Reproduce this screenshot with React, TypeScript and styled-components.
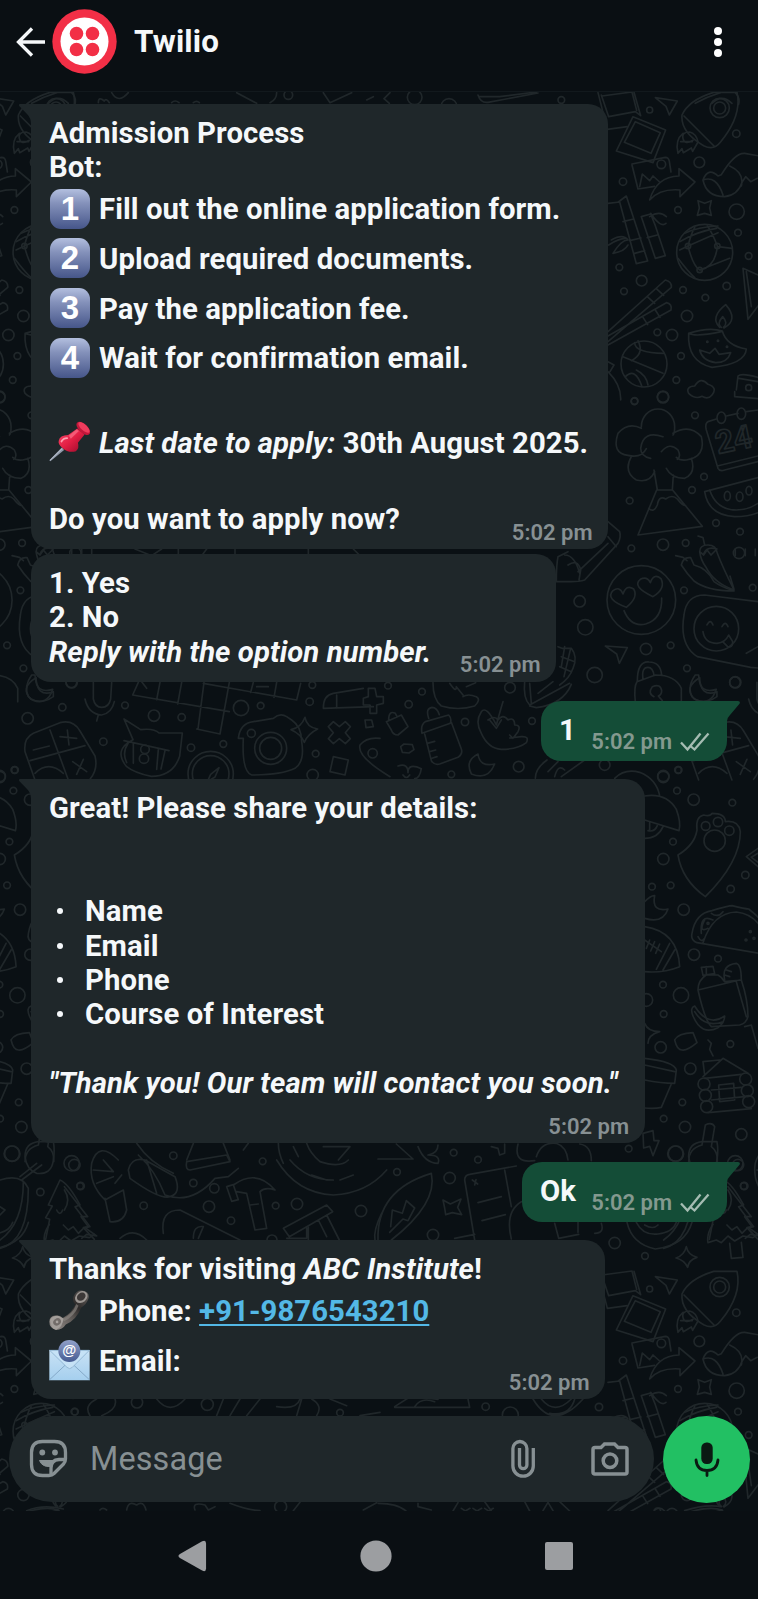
import React from "react";
import styled, { createGlobalStyle } from "styled-components";

const GlobalStyle = createGlobalStyle`
  * { box-sizing: border-box; }
  body { margin: 0; background: #0a1014; }
`;

const Screen = styled.div`
  position: relative;
  isolation: isolate;
  display: flex;
  flex-direction: column;
  width: 758px;
  height: 1599px;
  overflow: hidden;
  background: #0a1014;
  font-family: Roboto, "Liberation Sans", sans-serif;
  color: #f5f8fa;
`;

const Header = styled.header`
  display: flex;
  align-items: center;
  height: 92px;
  padding: 0 29px 8px 16px;
  background: #0a0f13;
  border-bottom: 1px solid #12191d;
`;

const Logo = styled.svg`
  width: 65px;
  height: 65px;
  margin-left: 6px;
`;

const Title = styled.h1`
  margin: 0 auto 0 17px;
  font-size: 31.3px;
  line-height: 40px;
  font-weight: 700;
  letter-spacing: 0.15px;
`;

const Chat = styled.main`
  position: relative;
  display: flex;
  flex-direction: column;
  height: 1419px;
  overflow: hidden;
`;

const Wallpaper = styled.svg`
  position: absolute;
  inset: 0;
  z-index: -1;
`;

const Bubble = styled.section<{ $w: number; $gap: number; $out?: boolean; $tail?: boolean }>`
  position: relative;
  width: ${(p) => p.$w}px;
  margin: ${(p) => p.$gap}px ${(p) => (p.$out ? 31 : 0)}px 0 ${(p) => (p.$out ? 0 : 31)}px;
  align-self: ${(p) => (p.$out ? "flex-end" : "flex-start")};
  padding: 12px ${(p) => (p.$out ? 17 : 15.5)}px 3.500px 18px;
  border-radius: ${(p) => (!p.$tail ? "20px" : p.$out ? "20px 0 20px 20px" : "0 20px 20px 20px")};
  background: ${(p) => (p.$out ? "#144d37" : "#1f272a")};
`;

const Tail = styled.svg<{ $out?: boolean }>`
  position: absolute;
  top: 0;
  ${(p) => (p.$out ? "right: -13px;" : "left: -13px;")}
  width: 14px;
  height: 20px;
  fill: ${(p) => (p.$out ? "#144d37" : "#1f272a")};
`;

const Line = styled.div`
  height: 34.4px;
  font-size: 29.3px;
  line-height: 34.4px;
  font-weight: 700;
  letter-spacing: 0.07px;
  white-space: nowrap;
`;

const EmojiLine = styled(Line)`
  display: flex;
  align-items: center;
  gap: 9px;
  height: 49.7px;
`;

const Keycap = styled.span`
  display: flex;
  align-items: center;
  justify-content: center;
  width: 40px;
  height: 40px;
  margin: 0 0 2px 1px;
  border-radius: 11px;
  background: linear-gradient(#b3bfdf, #8592bb 35%, #46568a);
  color: #fff;
  font: 700 33px/40px "Liberation Sans", sans-serif;
`;

const Emoji = styled.svg`
  width: 41px;
  height: 41px;
  margin-bottom: 2px;
`;

const Footer = styled.div<{ $space?: number }>`
  display: flex;
  align-items: flex-end;
  justify-content: space-between;
  margin-top: ${(p) => p.$space || 0}px;
`;

const FooterText = styled(Line)`
  margin-bottom: 9.4px;
`;

const FooterEmojiLine = styled(EmojiLine)`
  margin-bottom: 9.4px;
`;

const OutText = styled(Line)`
  margin-bottom: 10px;
`;

const Time = styled.span<{ $lift?: number }>`
  display: flex;
  align-items: center;
  gap: 8px;
  height: 26px;
  margin-bottom: ${(p) => p.$lift || 0}px;
  margin-left: auto;
  font-size: 22px;
  line-height: 26px;
  font-weight: 600;
  color: ${(p) => (p.$lift ? "#84998f" : "#879093")};
  white-space: nowrap;
`;

const Bullets = styled.ul`
  margin: 68.8px 0 34.4px;
  padding: 0;
  list-style: none;
`;

const Item = styled.li`
  display: flex;
  align-items: center;
  gap: 22px;
  height: 34.4px;
  padding-left: 8px;
  font-size: 29.3px;
  font-weight: 700;
  letter-spacing: 0.1px;
  &::before {
    content: "";
    width: 6px;
    height: 6px;
    border-radius: 50%;
    background: #f5f8fa;
  }
`;

const Phone = styled.a`
  color: #53b8e6;
  text-decoration: underline;
  text-decoration-thickness: 2px;
  text-underline-offset: 3px;
`;

const Composer = styled.form`
  display: flex;
  align-items: flex-start;
  gap: 9px;
  margin: auto 8px 8px 9px;
`;

const Field = styled.div`
  display: flex;
  align-items: center;
  width: 645px;
  height: 86px;
  padding: 0 25px 0 20px;
  border-radius: 43px;
  background: #1f272a;
  color: #879093;
`;

const Placeholder = styled.span`
  margin: 0 auto 0 21px;
  font-size: 32.4px;
  line-height: 40px;
  letter-spacing: 0.15px;
`;

const CameraIcon = styled.svg`
  width: 38px;
  height: 36px;
  margin-left: 55px;
`;

const Mic = styled.div`
  display: flex;
  align-items: center;
  justify-content: center;
  width: 87px;
  height: 87px;
  border-radius: 50%;
  background: #22c063;
`;

const Navigation = styled.nav`
  display: flex;
  align-items: center;
  justify-content: space-between;
  height: 88px;
  padding: 2px 185px 0 178px;
  background: #0a0f13;
`;

const dots = (list: number[][]) => list.map(([x, y, r], i) => <circle key={i} cx={x} cy={y} r={r} />);

const Tile = () => (
  <g id="tile">
    <g transform="translate(378 0) scale(.33333)">
      <path d="M18 296l18-18M18 296l16 14M300 285q8 25 30 22l150-28M305 290h60l110-14" />
      <path d="M660 278l28 110 60-8M670 285l22 65 80-15 16 12-20-70M672 288l90-12 14 55" />
      <path d="M765 350l98 40-38 98-110-35zM772 365l75 33-28 62-80-33z" />
      <path d="M832 293l66 10-24 42-10-26z" />
      <path d="M912 345q20-45 95-68h70q16 70-50 150-20 26-50 10-70-40-65-92zM918 348l90 90" />
      <circle cx="1025" cy="324" r="29" /><circle cx="1025" cy="324" r="18" />
      <path d="M915 400q-25 20-15 60l12-14 4 12 24-14 4 10 16-28q-5-25-25-30-25 0-20 20t30 5M908 425h35" />
      <path d="M762 492l100-20q10 0 12 12l5 32M762 495l18 72 50-8M785 560l8-38 22 20 10-14 20 18" /><circle cx="850" cy="493" r="13" />
      <path d="M815 600q20-70 88-72v-22l48 40-45 44v-20q-60-5-91 30z" />
      <path d="M975 540q15-40 45-12l10-4q40-66 70-64l44 8M975 540q10 50 65 50 40-5 53-45l10-15 15 15 20-10M975 540q40-15 60 45M1055 498q45 20 35 60" />
      <path d="M960 602l20 8 20-8-5 22 5 22-20-6-22 6 6-22zM690 610l35-4 50 185 34-8-64-195-24 18M735 665l32-8M755 722l34-8M770 760l30-8" />
      <path d="M790 650l42 125 30-8-30-90-14-35-28 8zM808 713l30-8M815 650q30-20 50 0M818 640q30 45 46 30M700 720q35-20 50 0-20 0-45 40 35-5 45-25M692 735q30-20 50-20" />
      <circle cx="980" cy="757" r="84" />
      <path d="M920 700q40-20 100-22M905 725q50-30 110-40M900 775q30 40 50 58M930 738q15 60 35 72M930 738l90-40M965 810l90-35M1018 738q-5 60-50 72M930 738q10-40 20-55M1018 738q-15-40-30-60M1020 740l42 5M905 750l25-12" />
      {dots([[930, 738, 8], [1018, 738, 8], [965, 810, 8]])}
      <path d="M690 995l172-155q20 5 18 22L690 1025M690 1008l175-100q18 4 14 22L690 1035M808 890l22 20M835 866l22 20M795 952l14 22M832 930l14 22" />
      <path d="M1095 805l45 20M1095 805l15 153 30-40M1105 815l15 105" />
      <path d="M932 1000q-5 85 70 102 100-10 103-55-60-10-72-54-40-12-101 7zM932 1000q20 12 98-5M1025 982q-30-30 18-68 40 45-5 70M1030 982q-15-10 4-32 18 20 2 32M965 1050l30 10 16-15 12 18 35-5q-10 30-45 30-40-5-48-38z" />
      <circle cx="798" cy="1092" r="69" />
      <path d="M735 1070l120 50M770 1028q0 30 88 32M742 1130q30-30 50 30M780 1022q20 40 -20 60M810 1155q-5-30-35-45" />
      <path d="M932 1180q-10-20 18-22 18-30 40-5 30 10 12 32-12 15-30 4-20 10-40-9zM1075 1170l5-42q10-10 60 4M1070 1175v15l70 6M1083 1135l57 10M690 1115q40 40 38 85M690 1085l18 10-12 20" />
      {dots([[110, 292, 22], [213, 320, 24], [550, 300, 10], [815, 330, 9], [1075, 401, 11], [964, 487, 16], [735, 545, 11], [900, 630, 10], [1076, 635, 23], [1080, 698, 10], [1112, 768, 10], [724, 802, 10], [791, 842, 16], [738, 874, 10], [915, 870, 10], [1046, 858, 11], [982, 893, 10], [927, 948, 17], [838, 997, 10], [882, 1005, 17], [909, 1068, 10], [895, 1140, 10], [855, 1190, 17], [770, 1203, 10], [1112, 1163, 9], [988, 1025, 2], [1020, 1022, 2], [1047, 1040, 2]])}
    </g>
    <g transform="translate(378 380) scale(.33333)">
      <path d="M790 140a50 53 0 1 1 100 0q0 20-5 25M790 145q-40-20-70 15-20 60 30 66 40 10 55-20M885 160q50-30 85 10 15 60-45 70-20 2-30-8M760 230q-25 45 15 70 40 10 55-25M940 235q15 45-20 60-40 0-55-30M855 170q-60-20-67 35 0 25 30 30M850 215q25-30 50-5 10 20-2 28M828 270l10 60h45l3-45M836 330l-56 135 193-26-90-110M812 385q15 15 26-10 5-30 25-18 20-15 35 0 15 20 25 20" />
      <path d="M990 125q-10 5-5 25l35 115q5 10 20 5l100-25M990 125l25-8M1045 108l35-8M1105 95l35-5M1018 258l122-30" />
      <ellipse cx="1030" cy="113" rx="13" ry="17" /><ellipse cx="1090" cy="101" rx="13" ry="17" />
      <text x="1020" y="222" fontSize="96" fontWeight="700" fontFamily="Roboto" transform="rotate(-12 1020 222)">24</text>
      <path d="M980 335l160-42M980 335q10 70 90 75 40 0 70-12M995 330q20 60 80 60 35 0 65-20" />
      <ellipse cx="1048" cy="348" rx="9" ry="14" /><ellipse cx="1085" cy="350" rx="10" ry="14" /><ellipse cx="1113" cy="332" rx="9" ry="13" />
      <path d="M690 425l35 30q5 15-5 35l-100 110q-15 5-40 5h-45q0-50 5-75l30-15M560 525q30 0 45 55M600 575l90-85M570 555q30-20 38 15l-5 30M690 470l25 30" />
      <circle cx="790" cy="660" r="103" />
      <path d="M745 682q-65-25-40-50 20-15 30 10 10-30 32-15 15 25-22 55zM825 650q-65-30-38-52 20-10 30 10 10-30 32-12 15 30-24 54zM738 692q20 50 65 40 50-15 48-78" />
      <path d="M965 515q0-20 25-20 25 0 28 25 15 40 50 110-60-20-85-70-15-20-18-45zM960 468l15 5 5 22M1068 628l-12-40M965 515l12 10 10-15 12 15 15-15" />
      <path d="M910 555q5-25 28-22l10 22q40 10 60 50 20 15 60 28-80 0-120-30-20-20-38-48zM893 527l22 5 12 10" />
      <path d="M1140 665l-160-20q-55 0-62 60-15 90 40 125l160 32 22 2M1105 820l35-20" />
      <circle cx="1015" cy="746" r="67" /><path d="M987 735q10-20 18 0M1032 740q10-20 18 0M975 755q5 35 42 35 25-2 35-25l12 20q0 20-15 15l-15-15" />
      <path d="M682 798l66 5-24 47-8-28z" />
      <path d="M772 965q-5-45 5-60l55-20q60 0 78 40v40M778 903q0-60 35-57 35 0 38 40M795 897q-5-35 15-35 15 0 18 25M828 950q-20-10-5-30 25-10 28 12 0 12-10 16l12 14" />
      <path d="M965 893q-50 30-15 65 50 20 65-30-50 15-50-35z" />
      <path d="M540 800l12 5 28 0q20 25 5 60-10 30-40 50M550 830l40 15M545 860l35 15M560 800l-10 60M578 805l-20 85" />
      <path d="M440 905q-5 50 15 70l120-65M460 970l-5-60M455 978l20 5q80-10 105-70M480 940l45-35" />
      <path d="M165 908q0 50 25 70 50 15 100 0 20-20 5-28-25-10-40 0M215 910q20 30 20 10l20 25M265 920l28-12" />
      <path d="M375 965q-5 15-20 70-30-60-45-40-20 30 0 65 20 45 60 48 50 0 75-20 10-20-15-18l-35 4M330 1020q20-15 30 0 15-20 30 0 20-10 20 15 20 0 10 20l-15 20-10-10M335 1020l20 25 15-25" />
      <path d="M132 1060l85-30q5-15-5-25l-70 20q-15 10-10 35zM140 1062l20 80q10 15 25 10l55-20q15-10 10-25l-30-80M152 1015q-10-30 10-33 15 0 22 22M148 1090l22-6M155 1115l18-5M162 1135l15-5" />
      <path d="M25 1025l45-20 20 35-30 25q-15 0-20-15zM32 1020q0-30 20-20l5 10M68 1100l10-8 25 2 5 15-15 10-20-2z" />
      <path d="M300 1122q-40 20-20 60 50 20 70-30-45 10-50-30zM60 1158q30-10 30 20 0-30 40-12-5 30-20 30l20 10M75 1185q10 15 20 0" />
      {dots([[855, 52, 17], [769, 64, 10], [951, 106, 10], [978, 290, 10], [942, 330, 10], [755, 362, 10], [1014, 429, 10], [1086, 455, 10], [1083, 519, 17], [760, 505, 10], [855, 494, 17], [923, 489, 10], [1124, 623, 10], [918, 631, 10], [605, 664, 17], [622, 742, 23], [804, 807, 17], [878, 796, 10], [650, 885, 23], [927, 865, 10], [1071, 907, 16], [396, 923, 16], [132, 935, 10], [92, 973, 11], [462, 1023, 10], [261, 1026, 11], [422, 1160, 16], [680, 1155, 16], [220, 1183, 10], [856, 1188, 17], [900, 1170, 10], [30, 917, 10]])}
    </g>
    <g transform="translate(378 760) scale(.33333)">
      <path d="M710 55q30-30 75-18 50 20 60 70M800 108q65-10 95 40 15 40 8 64l-103-32M800 235q40 0 55-35M810 212q20 5 28-15M815 188v25" />
      <path d="M472 55q0-30 35-55M510 35l30-30M550 50l70-50M530 50q10-40 30-20" />
      <path d="M957 210q-5-40 20-45 20 5 25-5 40 0 40 25 40-5 45 30 0 90-105 195-70-50-82-125 50-30 57-75z" />
      <circle cx="1010" cy="242" r="32" /><circle cx="983" cy="198" r="13" /><circle cx="1020" cy="186" r="14" /><circle cx="1054" cy="212" r="14" />
      <path d="M1140 265l-35 25 35 30M1140 280l-20 12 20 15" />
      <path d="M800 425q20-20 30-18-10 50 40 40-15 45-70 28" />
      <path d="M800 500q100 15 105 120-50 20-105 15M875 550l-40 78M890 570l-35 60M800 540l50 35M815 540l-10 25M830 545l-12 28M845 552l-12 28" />
      <path d="M942 520q10-60 60-68 50-15 60-15 40 10 50 10 25 20 28 25M942 520q-5 20 15 28l185 32M975 548q30-90 100-92 45 5 70 40M970 520q-5-60 35-40M980 480q-20 40 10 25M1000 460q20 15 35-5M960 530q10 20 20 5" />
      {dots([[1117, 515, 3], [1104, 540, 3], [1128, 535, 3], [990, 490, 3]])}
      <path d="M960 690q0-30 25-45h35q10 5 20 20l50-5q20 60 20 110-5 20-25 25l-85 5q-20-20-40-110l125-30M1075 665l30 105M970 622l35-3 5 22-35 5zM985 620v22M1040 660q-10-45 35-50 15 5 15 50M1045 630l15 5M1040 645l15 5" />
      <path d="M950 738q-15 5-5 30 25 60 75 35 20-15 20-35-50 35-90-30zM950 755q30 50 85 30" />
      <path d="M890 840q10-20 55-22l12 30q-30 25-45 22-15 0-22-30zM990 840l10 10-5 18 10 20M1100 800l20-5 20 70M800 790q10 25 45 25-35 10-35 35" />
      <path d="M800 895q90 10 95 35l-5 40q-40 0-90-10M880 972l-30 70q-20 5-50 2M800 915l90 20" />
      <path d="M980 945l-5-40 50-5M1035 895l-60 55M1035 895l75 45M980 955l110-12M1000 990l90-8M1000 1020l100-10M990 1058l130-12M1022 975l45-5 3 50-45 5z" />
      {dots([[978, 972, 18], [982, 1006, 18], [986, 1040, 18], [1103, 957, 18], [1108, 992, 18], [1112, 1025, 18]])}
      <path d="M795 1120l30-8 3 30 15 0-18 45-10-28-18 5zM932 1205q0-40 40-50l10-60q20-10 28 5l-10 60q20 15 18 45" />
      <path d="M0 1197h105l-50-45M120 1160q20 50 60 50 10-25-30-25 30-5 30-30M340 1160l20 5 5 20 15-5v-28M420 1152q-15 60 50 50M605 1152q35 5 35 50M475 1190q15-45 60-40 30 10 35 50" />
      {dots([[856, 51, 17], [897, 92, 10], [947, 119, 17], [1063, 128, 10], [885, 245, 10], [856, 297, 17], [1102, 345, 11], [1058, 387, 11], [822, 380, 10], [878, 376, 10], [917, 449, 17], [948, 584, 17], [1020, 596, 10], [855, 674, 10], [909, 706, 23], [805, 720, 19], [857, 762, 10], [1057, 852, 10], [848, 862, 17], [937, 926, 17], [913, 1027, 10], [857, 1076, 10], [921, 1101, 17], [1090, 1123, 17], [892, 1181, 23], [752, 1166, 10], [227, 1178, 10], [300, 1199, 10]])}
    </g>
    <g transform="translate(378 1160) scale(.33333)">
      <path d="M0 240Q-5 90 160 40q20 90-120 200M38 200l5-50 30 10 12-38 25 22-20 38-15-5-40 40" />
      <path d="M195 120l22 12 32-15-10 25 12 22-28-6-20 6-3-20zM290 240l-30-180q0-15 15-17l140-25M380 30l20 110M300 128l70-18M312 182l70-18M283 60l16 12M290 75l4-16M230 235l60-12M430 125q-50 30-30 112M530 190l12 45 60-12M600 187v30M670 190q10 30-20 30" />
      <path d="M747 187q15 65 85 80 90-10 110-80M775 187q20 40 65 35 45-5 55-35M800 195q25 15 40 0" />
      <path d="M1050 80l70 90-20 0 22 30-15 3 33 35M1050 90q20 30 0 60M990 248q-5-25 15-55M990 248l25-8 15 8 20-20 20 15 25-15 30 5 15-10M1055 250l5 45 35-3-5-45" />
      <path d="M925 260q5 25 32 32-25 8-28 30-10-22-35-28 25-8 31-34z" />
      {dots([[57, 36, 10], [215, 54, 17], [165, 225, 17], [710, 249, 17], [801, 288, 10], [1097, 78, 10], [1080, 15, 17]])}
    </g>
    <g transform="translate(0 380) scale(.33333)">
      <path d="M95 885q-25 35-10 65 30 30 75 0V935q-50 20-55-50zM280 907v50q5 25 25 25 22 0 27-25l3-50M255 957q10 45 50 48 30-5 38-40M295 1005l-5 18" />
      <path d="M415 907l-17 38 290 50M480 907l-10 52M545 907l-12 65M612 907l-18 140M590 1047l70 15 28-155M610 910l280 50 12-50M760 907l-8 30M830 907l-8 45M425 905l15 20M770 920h35" />
      <path d="M75 1115q-5-40 25-55l80-32q40-10 60 25l45 75q10 40-15 70M75 1115l30 85M150 1050l55 150M90 1142l165-45M100 1110l48-12M180 1070l50 5M202 1050l5 45M218 1145l42 30M250 1138l-20 45M105 1180q40-40 85 0" />
      <path d="M372 1017l50 32q40-5 55 10l70 0-8 70q-20 60-85 60-50-10-75-30-40-50 20-80zM372 1082l135 30M385 1088q-20 30-5 60M400 1090v60M475 1108l-5 60M495 1112l-12 55" />
      <circle cx="435" cy="1108" r="13" /><circle cx="432" cy="1136" r="14" />
      <path d="M715 1075q5-45 45-50l60-10q20-18 40-5l15 10q30 20 30 65 10 60-20 80-40 20-130 20-30-10-25-110z" />
      <circle cx="812" cy="1105" r="48" /><circle cx="812" cy="1105" r="33" /><circle cx="754" cy="1060" r="12" />
      <path d="M915 1012q5 30 38 35-30 15-40 40-10-25-40-38 30-5 42-37z" />
      <path d="M985 1040l15-15 18 15 18-15 15 15-15 18 15 18-15 15-18-15-18 15-15-15 15-18zM1095 1020l20 0 5 20-22 3zM1000 1130l45 10-10 45-45-10z" />
      <path d="M970 985q0-40 30-45l90-15M970 985l150-5M1010 985v-40M1090 955l15-5 0-25h20l5 25 20 0v20l-20 5v25h-20v-25h-20z" />
      <path d="M1170 1190q-100-60-90-95 20-25 60-20" /><circle cx="1118" cy="1120" r="14" />
      <circle cx="632" cy="1182" r="68" /><circle cx="632" cy="1182" r="55" /><path d="M622 1205l10-22 25-20-12 28z" />
      {dots([[187, 982, 11], [375, 976, 10], [462, 1007, 17], [545, 1012, 11], [723, 984, 23], [782, 977, 10], [937, 915, 10], [929, 965, 11], [83, 1015, 17], [310, 1085, 11], [573, 1103, 11], [670, 1092, 10], [947, 1121, 10], [938, 1185, 17], [45, 1170, 10], [215, 907, 17]])}
      <path d="M160 507q-30-10-40 15M215 507v20M245 507v20M275 507v20M405 507l50 20 30-20M535 507v20M620 507l-15 20M705 507v20M925 507v20M1060 507l20 20" />
    </g>
    <g transform="translate(0 1160) scale(.33333)">
      <path d="M0 265q85-20 85-180-20-45-85-25M0 240q70-50 70-175M0 140l15 10-15 15M65 60l60-45M60 50l50-40M75-10q0-40 40-45l45 0q5 25 0 55-5 45-50 40-30-10-35-50z" />
      <path d="M180 60l-35 75 12 3-20 35 12 5-12 60M180 60q25 10 60 75l-15 5 45 60-15 3 35 25-30-5-15 12M170 150q10 20 18 0M190 195l15 15 15-10 15 20 15-15" />
      <path d="M355 0q-60-60-80 10-10 60 40 110l55-30M290 70l50-20M280 30l60 5M310 0l30 35M315 115l15 70q40 5 50-35l-10-60M345 70l20-25" />
      <path d="M385 30q10-40 50-30l90 50q20 50-15 60-30 10-120-55zM440 0l30 100M415-15q50 45 80 120 80 30 150-50l40-5 30-25" />
      <path d="M490 220q-10-70 50-70l180 90M580 235q0-40 30-35l-15 35M560 5l120-20 10 20-120 25q-15 0-10-25z" />
      <path d="M680 80l20-6 15 45-20 5zM700 75q70-50 125 15-30-10-45 5l20 110-35 5-25-110-30-5M750 135l25-3" />
      <path d="M850 205l130-70 18 20-130 75zM860 235h60v-30M980 165l38 75M955 180l25 50M925 200v40M1125 240q-5-30 20-80" />
      <path d="M830 0q60 100 170 105 100-5 160-75M870 0q50 60 130 60M935 45l45 15M1020 60l40-15M360 235q40-35 80 5" />
      {dots([[215, 10, 23], [242, 78, 11], [121, 96, 11], [431, 137, 11], [580, 69, 11], [643, 85, 14], [627, 140, 17], [693, 182, 11], [827, 137, 10], [891, 132, 17], [1083, 153, 17], [816, 240, 15]])}
    </g>
    <g transform="scale(.33333)">
      <path d="M95 310q35-20 75-32M215 278q15 15 10 35M145 310q30-30 60 0M295 308q0-20 18-5 5-10 15 5M335 278q20 35 50 0M710 278l60 32M830 278q0 20-20 30M970 278l20 30 65-30M1100 300l20-10M515 308q10-10 22 0M580 308q10-8 18 0" />
      <circle cx="865" cy="285" r="13" />
    </g>
    <g transform="translate(0 760) scale(.33333)">
      <path d="M410 1150q40 60 110 90M560 1200l20-50M670 1150l20 50M730 1170l15-20M835 1150q0 30 15 60M880 1160l15 30M920 1150q10 30 40 55 60 20 85-5M970 1160h80l-35 40" />
      {dots([[37, 1181, 23], [520, 1187, 11], [788, 1204, 10]])}
    </g>
  </g>
);

const ComposerDoodles = () => (
  <>
    <g transform="translate(378 1160) scale(.33333)">
      <path d="M50 740l50-32 80 10M50 742h225l-5-25M110 740q20-30 60-15M465 717q60 100 150 0M490 717q40 50 90 0M515 760q60 10 75-42" />
      {dots([[323, 740, 11], [397, 765, 24], [663, 741, 11]])}
      <path d="M0 1030q60 0 85 24M120 1030v10l40 10M225 1053l15-25M320 1025l20 28M440 1025l15 28M495 1052l15-25 15 25M545 1025l30 28M250 1045l12 8 14-8M285 1045l12 8 14-8M320 1045l12 8 14-8M920 1052q60-20 110-12M830 1050q15-12 30 3" />
    </g>
    <g transform="translate(0 1160) scale(.33333)">
      <path d="M270 767q-20-30 20-50M305 767q50-20 40-50M470 717q40 50 85 0M650 767l20-50M690 767l30-50M740 767l40-50M830 740q60 10 70-23M890 767l15-50M950 767q20-30-15-50M990 717l50 20M1080 767l60-10" />
      {dots([[411, 727, 17], [225, 755, 10], [622, 733, 18], [1020, 758, 10]])}
      <path d="M80 1052q50-20 110-5M380 1050q5-30 30-15 20-15 28 15M585 1050q-10-25 30-15l10 15 20-10M690 1030q50 20 90 22M880 1052l20-25M1090 1050l40-22M300 1050q8-10 20 0" />
      <circle cx="842" cy="1040" r="18" />
    </g>
  </>
);

const Doodles = () => (
  <Wallpaper width="758" height="1419" viewBox="0 92 758 1419" fill="none" stroke="#20272a" strokeWidth="5" strokeLinecap="round" strokeLinejoin="round">
    <Tile />
    <use href="#tile" x="-663.6" />
    <use href="#tile" x="663.6" />
    <use href="#tile" y="1179" />
    <use href="#tile" x="-663.6" y="1179" />
    <ComposerDoodles />
  </Wallpaper>
);

const TailIn = () => (
  <Tail viewBox="0 0 14 20"><path d="M2 0H14V20H13Q13 14 9 10L1.200 2Q.3 0 2 0z" /></Tail>
);
const TailOut = () => (
  <Tail $out viewBox="0 0 14 20"><path d="M0 0H12Q15 .5 13.300 3L4 14Q1 17 1 20H0z" /></Tail>
);

const Ticks = () => (
  <svg width="30" height="20" viewBox="0 0 30 20" fill="none" stroke="#a5bcb2" strokeWidth="2.300">
    <path d="M1 10.500L7.500 17.500L20.500 1.500M11 14.500L14.500 17.500L28.500 1.500" />
  </svg>
);

const steps = [
  "Fill out the online application form.",
  "Upload required documents.",
  "Pay the application fee.",
  "Wait for confirmation email.",
];

const Pushpin = () => (
  <Emoji viewBox="150 124 122 122">
    <defs>
      <linearGradient id="pin" x1="0" y1="0" x2="1" y2="1">
        <stop offset="0" stopColor="#f84a6c" /><stop offset=".5" stopColor="#e31f44" /><stop offset="1" stopColor="#96092a" />
      </linearGradient>
    </defs>
    <path d="M188 203L195 210L154 244L151 241z" fill="#8f99a9" />
    <path d="M190 205L153 241" stroke="#d5dde8" strokeWidth="2" />
    <path d="M179 183Q182 167 207 166L234 146L256 164L236 189Q241 206 230 214Q208 220 190 204Q176 193 179 183z" fill="url(#pin)" />
    <path d="M209 168L232 149L239 154L215 177z" fill="#ff7c92" opacity=".6" />
    <ellipse cx="252" cy="146" rx="25" ry="13" transform="rotate(43 252 146)" fill="#c4163a" />
    <ellipse cx="254" cy="143" rx="21" ry="9" transform="rotate(43 254 143)" fill="#ee3c5d" />
    <path d="M187 185Q192 175 204 175" stroke="#ff9fb0" strokeWidth="5" fill="none" strokeLinecap="round" />
  </Emoji>
);

const Receiver = () => (
  <Emoji viewBox="149 389 122 122">
    <defs>
      <linearGradient id="receiver" x1="0" y1="1" x2="1" y2="0">
        <stop offset="0" stopColor="#99938f" /><stop offset=".45" stopColor="#5b5653" /><stop offset=".65" stopColor="#2e2b2a" /><stop offset="1" stopColor="#6b6663" />
      </linearGradient>
    </defs>
    <path d="M222 408Q231 388 250 391Q270 395 267 413Q261 432 245 441Q232 476 199 492Q189 508 170 508Q150 503 150 483Q151 466 168 465Q181 463 190 472Q218 457 227 432Q217 423 222 408z" fill="url(#receiver)" />
    <path d="M190 475Q220 461 230 431L237 436Q225 467 193 483z" fill="#8b8581" opacity=".65" />
    <path d="M152 478Q160 464 178 466L192 474Q190 500 170 507Q154 503 152 478z" fill="#a39e9a" />
    <ellipse cx="173" cy="484" rx="12" ry="10" transform="rotate(-35 173 484)" fill="#726c69" />
    <ellipse cx="245" cy="410" rx="20" ry="16" transform="rotate(-40 245 410)" fill="#9b9692" />
    <ellipse cx="245" cy="409" rx="14" ry="11" transform="rotate(-40 245 409)" fill="#3c3837" />
    <circle cx="173" cy="484" r="4" fill="#aaa5a1" />
  </Emoji>
);

const Envelope = () => (
  <Emoji viewBox="149 540 123 123">
    <defs>
      <linearGradient id="paper" x1="0" y1="0" x2="0" y2="1">
        <stop offset="0" stopColor="#c9e2f5" /><stop offset="1" stopColor="#a5cfee" />
      </linearGradient>
      <linearGradient id="badge" x1="0" y1="0" x2="0" y2="1">
        <stop offset="0" stopColor="#91a1ca" /><stop offset="1" stopColor="#455b91" />
      </linearGradient>
    </defs>
    <path d="M150 570H271V661H150z" fill="url(#paper)" />
    <path d="M151 659L198 615M270 659L223 615" stroke="#84a9c8" strokeWidth="3" />
    <path d="M151 571L203 622Q211 630 219 622L270 571z" fill="#c6e2f6" stroke="#8cb2d0" strokeWidth="2.500" />
    <circle cx="210" cy="573" r="33" fill="url(#badge)" />
    <text x="210" y="586" textAnchor="middle" fontSize="43" fontFamily="Liberation Sans" fontWeight="700" fill="#fff">@</text>
  </Emoji>
);

export default function App() {
  return (
    <Screen>
      <GlobalStyle />
      <Header>
        <svg width="30" height="30" viewBox="0 0 30 30" fill="none" stroke="#f5f8fa" strokeWidth="3.300">
          <path d="M29 15H2.500M16 1.500L2.500 15L16 28.500" />
        </svg>
        <Logo viewBox="0 0 65 65">
          <circle cx="32.500" cy="32.500" r="32.200" fill="#f22f46" />
          <circle cx="32.500" cy="32.500" r="24" fill="#fff" />
          <g fill="#f22f46">
            <circle cx="24.500" cy="24.500" r="6.800" /><circle cx="40.500" cy="24.500" r="6.800" />
            <circle cx="24.500" cy="40.500" r="6.800" /><circle cx="40.500" cy="40.500" r="6.800" />
          </g>
        </Logo>
        <Title>Twilio</Title>
        <svg width="22" height="32" viewBox="0 0 22 32" fill="#fff">
          <circle cx="11" cy="5" r="4" /><circle cx="11" cy="16" r="4" /><circle cx="11" cy="27" r="4" />
        </svg>
      </Header>
      <Chat>
        <Doodles />
        <Bubble $w={577} $gap={12} $tail>
          <TailIn />
          <Line>Admission Process</Line>
          <Line>Bot:</Line>
          {steps.map((step, i) => (
            <EmojiLine key={step}><Keycap>{i + 1}</Keycap><span>{step}</span></EmojiLine>
          ))}
          <Line />
          <EmojiLine><Pushpin /><span><i>Last date to apply:</i> 30th August 2025.</span></EmojiLine>
          <Line />
          <Footer><FooterText>Do you want to apply now?</FooterText><Time>5:02 pm</Time></Footer>
        </Bubble>
        <Bubble $w={525} $gap={4.500}>
          <Line>1. Yes</Line>
          <Line>2. No</Line>
          <Footer><FooterText><i>Reply with the option number.</i></FooterText><Time>5:02 pm</Time></Footer>
        </Bubble>
        <Bubble $w={186} $gap={19} $out $tail>
          <TailOut />
          <Footer><OutText>1</OutText><Time $lift={2.500}>5:02 pm <Ticks /></Time></Footer>
        </Bubble>
        <Bubble $w={613.500} $gap={18} $tail>
          <TailIn />
          <Line>Great! Please share your details:</Line>
          <Bullets>
            <Item>Name</Item>
            <Item>Email</Item>
            <Item>Phone</Item>
            <Item>Course of Interest</Item>
          </Bullets>
          <Line><i>"Thank you! Our team will contact you soon."</i></Line>
          <Footer $space={13.700}><Time>5:02 pm</Time></Footer>
        </Bubble>
        <Bubble $w={205} $gap={18.500} $out $tail>
          <TailOut />
          <Footer><OutText>Ok</OutText><Time $lift={2.500}>5:02 pm <Ticks /></Time></Footer>
        </Bubble>
        <Bubble $w={574} $gap={18.500} $tail>
          <TailIn />
          <Line>Thanks for visiting <i>ABC Institute</i>!</Line>
          <EmojiLine><Receiver /><span>Phone: <Phone>+91-9876543210</Phone></span></EmojiLine>
          <Footer>
            <FooterEmojiLine><Envelope /><span>Email:</span></FooterEmojiLine>
            <Time>5:02 pm</Time>
          </Footer>
        </Bubble>
        <Composer>
          <Field>
            <svg width="40" height="40" viewBox="0 0 40 40" fill="none" stroke="#879093" strokeWidth="3.300">
              <path d="M13.500 2.500H25.500Q36.500 2.500 36.500 13.500V20Q36.500 23 34.500 25L25 34.500Q23 36.500 20 36.500H13.500Q2.500 36.500 2.500 25.500V13.500Q2.500 2.500 13.500 2.500z" />
              <path d="M36.500 20.500H30Q22 21 22 29V36" />
              <path d="M10.500 21.500H27Q22 23 21 27.500Q13 28 10.500 21.500z" fill="#879093" strokeWidth="1" />
              <g fill="#879093" stroke="none"><circle cx="13.300" cy="13.500" r="2.900" /><circle cx="26" cy="13.500" r="2.900" /></g>
            </svg>
            <Placeholder>Message</Placeholder>
            <svg width="26" height="40" viewBox="0 0 26 40" fill="none" stroke="#879093" strokeWidth="3.300">
              <path d="M23.300 9V27A10.200 10.200 0 0 1 2.900 27V9.500A7 7 0 0 1 16.900 9.500V26A3.700 3.700 0 0 1 9.500 26V9" />
            </svg>
            <CameraIcon viewBox="0 0 38 36" fill="none" stroke="#879093" strokeWidth="3.500">
              <path d="M4 6.500H10L13.500 3H23.500L27 6.500H34Q36 6.500 36 8.500V31Q36 33 34 33H4Q2 33 2 31V8.500Q2 6.500 4 6.500z" />
              <circle cx="19" cy="19.800" r="6.800" />
            </CameraIcon>
          </Field>
          <Mic>
            <svg width="28" height="38" viewBox="0 0 28 38" fill="none" stroke="#0a1a12" strokeWidth="2.800" strokeLinecap="round">
              <rect x="8.300" y="1.500" width="11.400" height="21.500" rx="5.200" fill="#0a1a12" stroke="none" />
              <path d="M3 19Q4 29.500 14 29.500T25 19M14 30V34.500" />
            </svg>
          </Mic>
        </Composer>
      </Chat>
      <Navigation>
        <svg width="29" height="32" viewBox="0 0 30 32" fill="#9c9ea1">
          <path d="M25 .8Q29 -1 29 3V29Q29 33 25 31L2 18Q-1 16 2 14z" />
        </svg>
        <svg width="32" height="32" viewBox="0 0 32 32" fill="#9c9ea1"><circle cx="16" cy="16" r="15.600" /></svg>
        <svg width="28" height="28" viewBox="0 0 28 28" fill="#9c9ea1"><rect width="28" height="28" rx="2" /></svg>
      </Navigation>
    </Screen>
  );
}
